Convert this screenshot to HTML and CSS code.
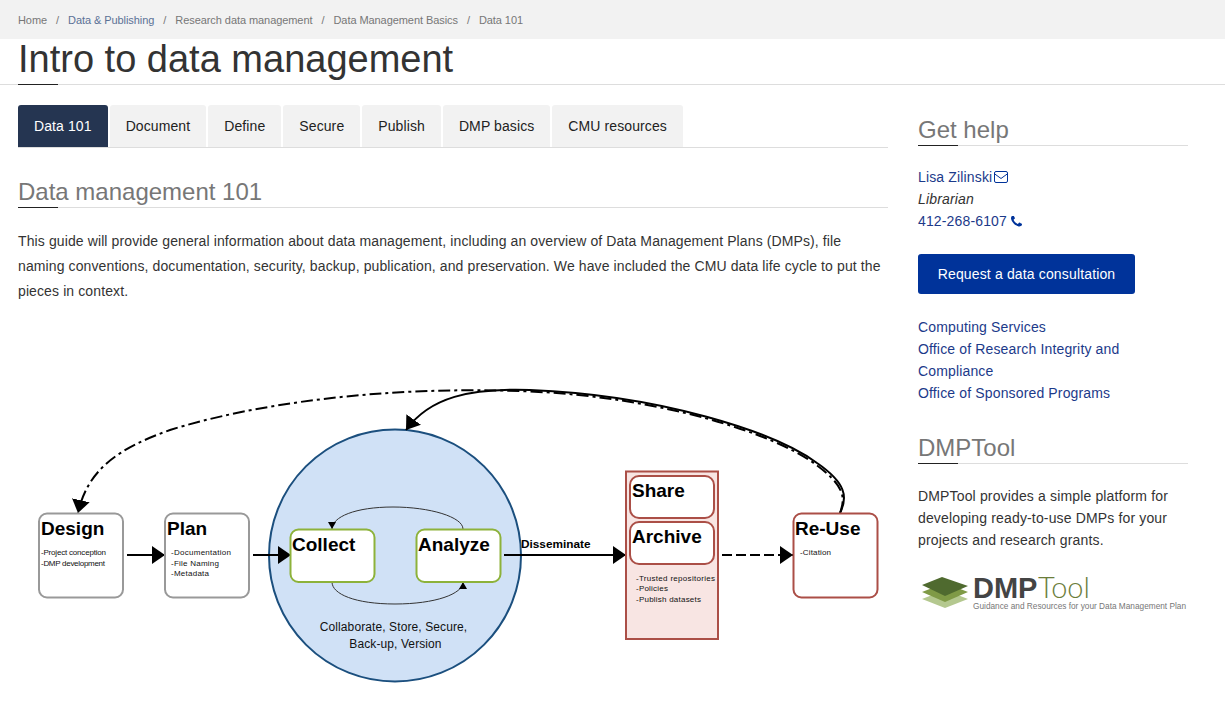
FILE: index.html
```html
<!DOCTYPE html>
<html lang="en">
<head>
    <meta charset="UTF-8">
    <title>Intro to data management</title>
    <link rel="stylesheet" href="styles.css">
</head>
<body>
    <nav class="breadcrumb">
        <a href="#">Home</a><span>/</span>
        <a href="#" class="crumb-link">Data &amp; Publishing</a><span>/</span>
        <a href="#">Research data management</a><span>/</span>
        <a href="#">Data Management Basics</a><span>/</span>
        <a href="#">Data 101</a>
    </nav>
    <h1 class="page-title">Intro to data management</h1>

    <div class="layout">
        <main class="content">
            <ul class="tabs">
                <li class="active"><a href="#">Data 101</a></li>
                <li><a href="#">Document</a></li>
                <li><a href="#">Define</a></li>
                <li><a href="#">Secure</a></li>
                <li><a href="#">Publish</a></li>
                <li><a href="#">DMP basics</a></li>
                <li><a href="#">CMU resources</a></li>
            </ul>

            <h2 class="section-title">Data management 101</h2>
            <p class="intro">This guide will provide general information about data management, including an overview of Data Management Plans (DMPs), file naming conventions, documentation, security, backup, publication, and preservation. We have included the CMU data life cycle to put the pieces in context.</p>

            <!-- viewBox uses page coordinates so the shapes are easy to compare -->
            <svg class="diagram" viewBox="18 320 870 375" width="870" height="375">
                <defs>
                    <marker id="head" markerUnits="userSpaceOnUse" markerWidth="14" markerHeight="20" refX="13" refY="9" orient="auto">
                        <path d="M0 0L13 9L0 18z" fill="#000"/>
                    </marker>
                    <marker id="headSmall" markerUnits="userSpaceOnUse" markerWidth="9" markerHeight="9" refX="7" refY="4" orient="auto">
                        <path d="M0 0L7 4L0 8z" fill="#000"/>
                    </marker>
                </defs>

                <circle cx="395" cy="555.5" r="126" fill="#d0e1f6" stroke="#1b4f7e" stroke-width="2"/>

                <g fill="none" stroke="#000">
                    <path d="M127 555H165" stroke-width="2" marker-end="url(#head)"/>
                    <path d="M253 555H291" stroke-width="2" marker-end="url(#head)"/>
                    <path d="M504 555H626" stroke-width="2" marker-end="url(#head)"/>
                    <path d="M722 555H793" stroke-width="2" stroke-dasharray="10 4" marker-end="url(#head)"/>
                    <path d="M840 513C848 497 846 483 817 463C775 432 660 395 530 390C470 388 430 397 406 430" stroke-width="2" marker-end="url(#head)"/>
                    <path d="M840 513C846 497 844 485 815 464C773 433 660 397 530 391.5C380 385 250 405 170 430C120 448 88 468 78 513" stroke-width="2" stroke-dasharray="12 4 3 4" marker-end="url(#head)"/>
                    <path d="M463 529C463 517 430 507 393 507C355 507 332 517 332 529" stroke="#333" marker-end="url(#headSmall)"/>
                    <path d="M332 582C332 594 355 604 395 604C435 604 463 594 463 582" stroke="#333" marker-end="url(#headSmall)"/>
                </g>

                <g stroke-width="2">
                    <rect x="39" y="513.5" width="84" height="84" rx="8" fill="#fff" stroke="#999"/>
                    <rect x="165" y="513.5" width="84" height="84" rx="8" fill="#fff" stroke="#999"/>
                    <rect x="290.5" y="529.5" width="84" height="52.5" rx="8" fill="#fff" stroke="#8db23a"/>
                    <rect x="416.5" y="529.5" width="84" height="52.5" rx="8" fill="#fff" stroke="#8db23a"/>
                    <rect x="626" y="471.5" width="92" height="167.5" fill="#f8e5e3" stroke="#ab4f47"/>
                    <rect x="630" y="476" width="84" height="42" rx="9" fill="#fff" stroke="#ab4f47"/>
                    <rect x="630" y="522" width="84" height="42" rx="9" fill="#fff" stroke="#ab4f47"/>
                    <rect x="793.5" y="513.5" width="84" height="84" rx="8" fill="#fff" stroke="#ab4f47"/>
                </g>

                <g class="box-title">
                    <text x="41" y="535">Design</text>
                    <text x="167" y="535">Plan</text>
                    <text x="292" y="551">Collect</text>
                    <text x="418" y="551">Analyze</text>
                    <text x="632" y="497">Share</text>
                    <text x="632" y="543">Archive</text>
                    <text x="795" y="535">Re-Use</text>
                </g>

                <g class="box-note">
                    <text x="41" y="555" textLength="65">-Project conception</text>
                    <text x="41" y="566" textLength="64">-DMP development</text>
                    <text x="171" y="555" textLength="60">-Documentation</text>
                    <text x="171" y="566" textLength="48">-File Naming</text>
                    <text x="171" y="576" textLength="38">-Metadata</text>
                    <text x="636" y="581" textLength="79">-Trusted repositories</text>
                    <text x="636" y="591" textLength="32">-Policies</text>
                    <text x="636" y="602" textLength="65">-Publish datasets</text>
                    <text x="800" y="555" textLength="31">-Citation</text>
                </g>

                <g class="circle-note">
                    <text x="393.5" y="631">Collaborate, Store, Secure,</text>
                    <text x="395.5" y="648">Back-up, Version</text>
                </g>
                <text class="arrow-label" x="521" y="548">Disseminate</text>
            </svg>
        </main>

        <aside class="sidebar">
            <h2 class="section-title side-title">Get help</h2>
            <ul class="contact">
                <li>
                    <a href="#">Lisa Zilinski</a>
                    <svg class="icon icon-mail" viewBox="0 0 14 12" width="14" height="12">
                        <rect x="0.5" y="0.5" width="13" height="11" rx="1.5" fill="none" stroke="currentColor"/>
                        <path d="M0.8 3L7 7.5L13.2 3" fill="none" stroke="currentColor"/>
                    </svg>
                </li>
                <li><em>Librarian</em></li>
                <li>
                    <a href="#">412-268-6107</a>
                    <svg class="icon" viewBox="192 192 1408 1408" width="11" height="11">
                        <path fill="currentColor" d="M1600 1240q0 27-10 70.5t-21 68.5q-21 50-122 106-94 51-186 51-27 0-53-3.5t-57.5-12.5-47-14.5-55.5-20.5-49-18q-98-35-175-83-127-79-264-216t-216-264q-48-77-83-175-3-9-18-49t-20.5-55.5-14.5-47-12.5-57.5-3.5-53q0-92 51-186 56-101 106-122 25-11 68.5-21t70.5-10q14 0 21 3 18 6 53 76 11 19 30 54t35 63.5 31 53.5q3 4 17.5 25t21.5 35.5 7 28.5q0 20-28.5 50t-62 55-62 53-28.5 46q0 9 5 22.5t8.5 20.5 14 24 11.5 19q76 137 174 235t235 174q2 1 19 11.5t24 14 20.5 8.5 22.5 5q18 0 46-28.5t53-62 55-62 50-28.5q14 0 28.5 7t35.5 21.5 25 17.5q25 15 53.5 31t63.5 35 54 30q70 35 76 53 3 7 3 21z"/>
                    </svg>
                </li>
            </ul>
            <a href="#" class="btn">Request a data consultation</a>
            <ul class="side-links">
                <li><a href="#">Computing Services</a></li>
                <li><a href="#">Office of Research Integrity and Compliance</a></li>
                <li><a href="#">Office of Sponsored Programs</a></li>
            </ul>

            <h2 class="section-title side-title">DMPTool</h2>
            <p class="side-text">DMPTool provides a simple platform for developing ready-to-use DMPs for your projects and research grants.</p>

            <svg class="dmp-logo" viewBox="918 560 270 56" width="270" height="56">
                <path d="M922 600L945 591L968 600L945 609z" fill="#b4c88f"/>
                <path d="M922 593L945 584L968 593L945 603z" fill="#7f9a46"/>
                <path d="M922 586L942 578L968 587L945 597z" fill="#4f6a2f"/>
                <text class="logo-dmp" x="973" y="599">DMP</text>
                <text class="logo-tool" x="1038" y="599">Tool</text>
                <text class="logo-sub" x="973" y="610" textLength="213" lengthAdjust="spacingAndGlyphs">Guidance and Resources for your Data Management Plan</text>
            </svg>
        </aside>
    </div>
</body>
</html>
```

FILE: styles.css
```css
body { margin: 0; font-family: "Liberation Sans", Arial, sans-serif; font-size: 14px; color: #333; background: #fff; }
a { color: inherit; text-decoration: none; }
ul { list-style: none; margin: 0; padding: 0; }

.breadcrumb { display: flex; gap: 9px; align-items: center; height: 39px; padding: 0 18px; background: #f2f2f2; font-size: 11px; letter-spacing: -0.07px; color: #777; }
.crumb-link { color: #5b7196; }

.page-title { position: relative; margin: 0; padding: 0 18px; height: 45px; line-height: 41px; font-size: 38px; font-weight: 400; color: #333; border-bottom: 1px solid #ddd; }
.page-title::after { content: ""; position: absolute; left: 18px; bottom: -1px; width: 40px; height: 1px; background: #222; }

.layout { display: flex; gap: 30px; padding: 20px 18px 0; }
.content { width: 870px; flex: none; }
.sidebar { width: 270px; flex: none; padding-top: 11px; color: #333; letter-spacing: 0.15px; }

.tabs { display: flex; gap: 2px; border-bottom: 1px solid #ddd; letter-spacing: 0.1px; }
.tabs a { display: block; height: 42px; line-height: 42px; padding: 0 16px; background: #f2f2f2; color: #222; border-radius: 3px 3px 0 0; }
.tabs .active a { background: #253551; color: #fff; }

.section-title { position: relative; margin: 30px 0 0; height: 29px; line-height: 27px; font-size: 24px; font-weight: 400; letter-spacing: 0; color: #777; border-bottom: 1px solid #ddd; }
.section-title::after { content: ""; position: absolute; left: 0; bottom: -1px; width: 40px; height: 1px; background: #222; }
.side-title { margin-top: 0; }

.intro { margin: 21px 0 0; line-height: 25px; letter-spacing: 0.11px; color: #333; }
.diagram { display: block; margin-top: 16px; }

.box-title text { font-size: 19px; font-weight: 700; fill: #000; }
.box-note text { font-size: 8px; fill: #111; }
.circle-note text { font-size: 12px; letter-spacing: 0.1px; fill: #111; text-anchor: middle; }
.arrow-label { font-size: 11.8px; font-weight: 700; fill: #000; }

.contact { margin-top: 20px; line-height: 22px; }
.contact a, .side-links a { color: #1c3a8a; }
.icon { color: #00339a; vertical-align: -1px; }
.icon-mail { margin-left: -2px; }

.btn { display: block; width: 217px; height: 40px; line-height: 40px; margin-top: 22px; text-align: center; background: #00339a; color: #fff; border-radius: 3px; font-weight: 500; }

.side-links { margin: 22px 0 30px; line-height: 22px; }
.side-text { margin: 21px 0 0; line-height: 22px; }

.dmp-logo { display: block; margin-top: 8px; }
.logo-dmp { font-size: 29px; font-weight: 700; letter-spacing: 0; fill: #444; }
.logo-tool { font-family: Lato, sans-serif; font-size: 29px; font-weight: 300; letter-spacing: 0; fill: #6b7d3a; }
.logo-sub { font-size: 9.5px; letter-spacing: 0; fill: #777; }
```
